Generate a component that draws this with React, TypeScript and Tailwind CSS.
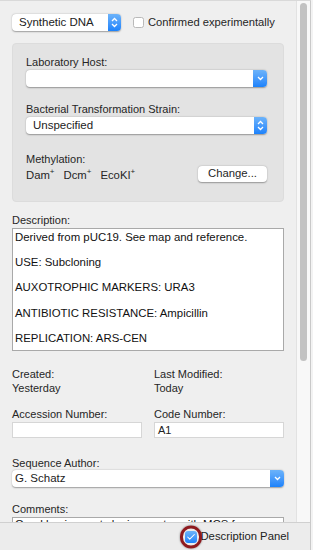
import { Check } from "lucide-react";

const font = { fontFamily: '"Liberation Sans", Arial, sans-serif' };

function Stepper() {
  return (
    <div className="w-[13px] self-stretch rounded-r-[4px] bg-gradient-to-b from-[#6cb3fa] to-[#1a82fb] flex items-center justify-center">
      <svg width="7" height="11" viewBox="0 0 7 11" fill="none" stroke="white" strokeWidth="1.3">
        <path d="M1 4 L3.5 1.5 L6 4" />
        <path d="M1 7 L3.5 9.5 L6 7" />
      </svg>
    </div>
  );
}

function DownArrow() {
  return (
    <div className="w-[14px] self-stretch rounded-r-[4px] bg-gradient-to-b from-[#6cb3fa] to-[#1a82fb] flex items-center justify-center">
      <svg width="7" height="5" viewBox="0 0 7 5" fill="none" stroke="white" strokeWidth="1.3">
        <path d="M1 1 L3.5 3.5 L6 1" />
      </svg>
    </div>
  );
}

function Popup({ value, w, combo }: { value: string; w?: string; combo?: boolean }) {
  return (
    <div
      className={`flex h-[17px] rounded-[4px] bg-white shadow-[0_0.5px_1.5px_rgba(0,0,0,0.35)] ${w ?? ""}`}
    >
      <div className={`flex-1 flex items-center whitespace-nowrap text-[11.5px] text-[#222] ${combo ? "pl-[3px]" : "pl-[7px]"}`}>
        {value}
      </div>
      {combo ? <DownArrow /> : <Stepper />}
    </div>
  );
}

function Field({ value }: { value?: string }) {
  return (
    <div className="h-[16px] bg-white border border-[#d6d6d6] text-[11px] text-[#222] pl-[3px] leading-[14px]">
      {value}
    </div>
  );
}

export default function App() {
  return (
    <div className="w-[313px] h-[550px] flex bg-[#f3f3f3] text-[#262626]" style={font}>
      <div className="w-[311px] flex flex-col border-r border-[#c9c9c9] border-t border-t-[#d9d9d9]">
        <div className="flex flex-1 min-h-0">
          {/* Main form */}
          <div className="flex-1 overflow-hidden bg-[#efefef] pl-3 pr-[12px] pt-[13px]">
            <div className="flex items-center whitespace-nowrap">
              <Popup value="Synthetic DNA" w="w-[109px] shrink-0" />
              <div className="ml-[12px] shrink-0 w-[11px] h-[11px] rounded-[2.5px] bg-white border border-[#b9b9b9]" />
              <span className="ml-[4px] text-[11.2px]">Confirmed experimentally</span>
            </div>

            <div className="mt-[12px] rounded-[4px] bg-[#e3e3e3] border border-[#dcdcdc] pl-[13px] pr-[16px] pt-[11px] pb-[18px] text-[11px]">
              <div className="leading-[15px]">Laboratory Host:</div>
              <Popup value="" combo />
              <div className="mt-[15px] leading-[15px]">Bacterial Transformation Strain:</div>
              <Popup value="Unspecified" />
              <div className="mt-[18px] leading-[15px]">Methylation:</div>
              <div className="flex items-center justify-between h-[16px]">
                <div className="text-[11.3px] flex gap-[9px]">
                  <span>
                    Dam<sup className="text-[8px] -top-[5px]">+</sup>
                  </span>
                  <span>
                    Dcm<sup className="text-[8px] -top-[5px]">+</sup>
                  </span>
                  <span>
                    EcoKI<sup className="text-[8px] -top-[5px]">+</sup>
                  </span>
                </div>
                <div className="w-[69px] h-[16px] -mt-[3px] rounded-[4px] bg-white shadow-[0_0.5px_1.5px_rgba(0,0,0,0.35)] flex items-center justify-center text-[11.3px]">
                  Change...
                </div>
              </div>
            </div>

            <div className="mt-[11px] text-[11px] leading-[14px]">Description:</div>
            <div className="mt-[1px] h-[123px] bg-white border border-[#a9a9a9] pl-[2px] pt-[2px] text-[11.4px] leading-[12.6px] text-[#111]">
              <div>Derived from pUC19. See map and reference.</div>
              <div className="h-[12.6px]" />
              <div>USE: Subcloning</div>
              <div className="h-[12.6px]" />
              <div>AUXOTROPHIC MARKERS: URA3</div>
              <div className="h-[12.6px]" />
              <div>ANTIBIOTIC RESISTANCE: Ampicillin</div>
              <div className="h-[12.6px]" />
              <div>REPLICATION: ARS-CEN</div>
            </div>

            <div className="mt-[16px] grid grid-cols-2 gap-x-[12px] text-[11px] leading-[14px]">
              <div>
                <div>Created:</div>
                <div>Yesterday</div>
              </div>
              <div>
                <div>Last Modified:</div>
                <div>Today</div>
              </div>
              <div className="mt-[12px]">
                <div className="mb-[1px]">Accession Number:</div>
                <Field />
              </div>
              <div className="mt-[12px]">
                <div className="mb-[1px]">Code Number:</div>
                <Field value="A1" />
              </div>
            </div>

            <div className="mt-[18px] text-[11px] leading-[14px]">Sequence Author:</div>
            <Popup value="G. Schatz" combo />

            <div className="mt-[15px] text-[11px] leading-[14px]">Comments:</div>
            <div className="mt-[1px] h-[40px] bg-white border border-[#a9a9a9] pl-[2px] text-[11.4px] leading-[12px] text-[#111] whitespace-nowrap overflow-hidden">
              Good basic yeast cloning vector with MCS from
            </div>
          </div>

          {/* Scrollbar */}
          <div className="w-[14px] bg-[#f8f8f8] border-l border-[#e2e2e2] pt-[2px] pl-[3px]">
            <div className="w-[7px] h-[358px] rounded-full bg-[#c2c2c2]" />
          </div>
        </div>

        {/* Bottom bar */}
        <div className="h-[28px] shrink-0 bg-[#ececec] border-t border-[#d0d0d0] flex items-center justify-end pr-[21px]">
          <div className="relative flex items-center">
            <div className="absolute -left-[5px] top-1/2 -translate-y-1/2 w-[22px] h-[23px] rounded-full border-[3px] border-[#8e1a1f] shadow-[0_0_2px_rgba(0,0,0,0.5)]" />
            <div className="w-[12px] h-[12px] rounded-[3px] bg-gradient-to-b from-[#6cb3fa] to-[#1a82fb] flex items-center justify-center">
              <Check size={10} strokeWidth={2.5} color="white" />
            </div>
          </div>
          <span className="ml-[3px] text-[11.3px] text-[#222]">Description Panel</span>
        </div>
      </div>
    </div>
  );
}
